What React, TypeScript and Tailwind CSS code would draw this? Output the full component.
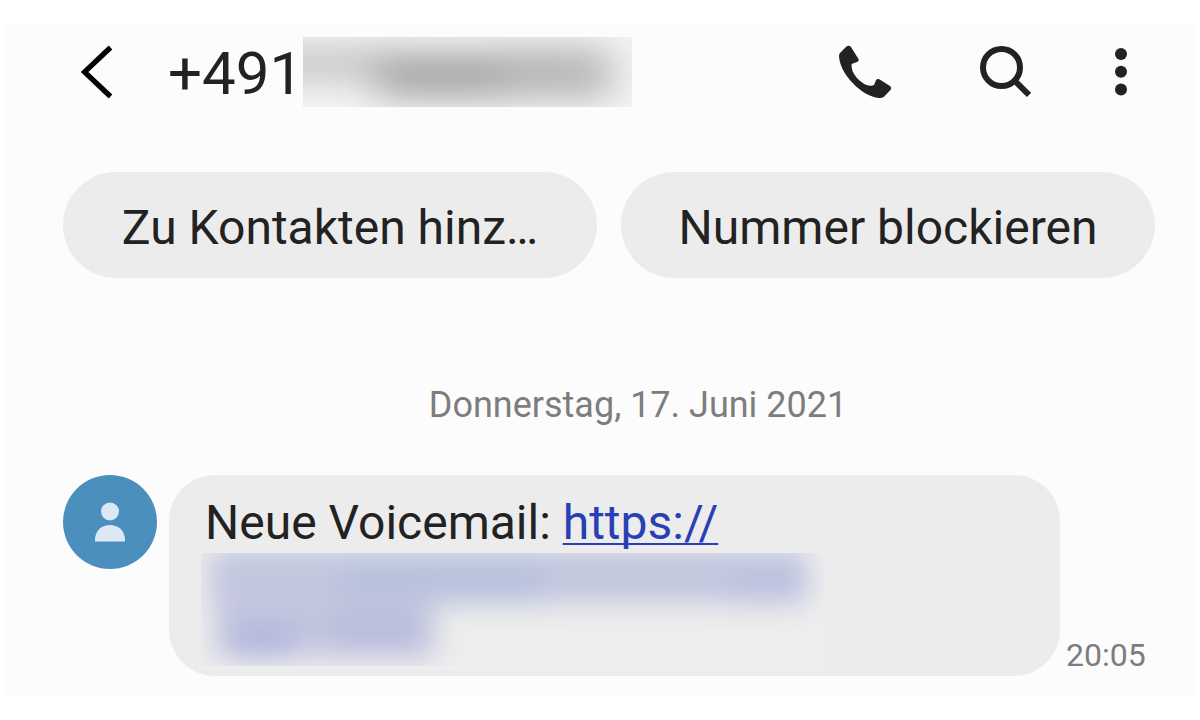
import React from "react";

function BackIcon() {
  return (
    <svg viewBox="0 0 32 54" className="h-[54px] w-8" fill="none" aria-hidden="true">
      <path d="M29.5 2.5 3.5 27l26 24.500" stroke="#000" strokeWidth="5.200" />
    </svg>
  );
}

function PhoneIcon() {
  return (
    <svg viewBox="117 71 168 168" className="h-14 w-14" fill="#222" aria-hidden="true">
      <path d="M140 78Q148 73 153 80L176 117Q177 121 173 124L155 131Q152 150 170 172Q195 198 214 196L222 194L228 180Q231 174 238 177L271 198Q276 203 272 208L252 229Q246 234 236 233C190 230 120 165 117 108Q117 101 120 98Z" />
    </svg>
  );
}

function SearchIcon() {
  return (
    <svg viewBox="0 0 52 56" className="h-14 w-[52px]" fill="none" stroke="#222" aria-hidden="true">
      <circle cx="22.500" cy="23.500" r="18.500" strokeWidth="6" />
      <path d="M35.500 36.500 50 51" strokeWidth="6" />
    </svg>
  );
}

function MoreIcon() {
  return (
    <svg viewBox="0 0 12 56" className="h-14 w-3" fill="#222" aria-hidden="true">
      <circle cx="6" cy="10" r="6" />
      <circle cx="6" cy="27.700" r="6" />
      <circle cx="6" cy="45.500" r="6" />
    </svg>
  );
}

function PersonIcon() {
  return (
    <svg viewBox="0 0 30 40" className="h-10 w-[30px]" fill="#dce9f5" aria-hidden="true">
      <circle cx="15" cy="9.500" r="9" />
      <path d="M0 39.500V36.500C1 28 7 23 15 23s14 5 15 13.500v3Z" />
    </svg>
  );
}

function HiddenNumber() {
  return (
    <svg
      viewBox="0 0 329 70"
      className="h-[70px] w-[329px] shrink-0"
      role="img"
      aria-label="Nummer unkenntlich gemacht"
    >
      <defs>
        <filter id="number-blur" x="-30%" y="-80%" width="160%" height="260%" colorInterpolationFilters="sRGB">
          <feGaussianBlur stdDeviation="20 16" />
        </filter>
        <clipPath id="number-clip">
          <rect width="329" height="70" />
        </clipPath>
      </defs>
      <g clipPath="url(#number-clip)">
        <rect width="329" height="70" fill="#f4f4f4" />
        <g filter="url(#number-blur)">
          <rect x="-50" y="8" width="130" height="38" fill="#cacaca" />
          <rect x="74" y="14" width="134" height="48" fill="#aaaaaa" />
          <rect x="200" y="10" width="108" height="52" fill="#b8b8b8" />
        </g>
      </g>
    </svg>
  );
}

function HiddenLink() {
  return (
    <svg
      viewBox="0 0 623 119"
      className="block h-[119px] w-[623px]"
      role="img"
      aria-label="Link unkenntlich gemacht"
    >
      <defs>
        <filter id="link-blur" x="-20%" y="-60%" width="140%" height="220%" colorInterpolationFilters="sRGB">
          <feGaussianBlur stdDeviation="14" />
        </filter>
        <clipPath id="link-clip">
          <rect y="2" width="623" height="113" />
        </clipPath>
      </defs>
      <rect y="2" width="623" height="117" fill="#eeeeee" />
      <g clipPath="url(#link-clip)">
        <g filter="url(#link-blur)">
          <rect x="8" y="-2" width="598" height="54" fill="#c2c6de" />
          <rect x="140" y="14" width="200" height="36" fill="#b5bfdc" />
          <rect x="530" y="20" width="76" height="30" fill="#babedd" />
          <rect x="14" y="42" width="220" height="64" fill="#c3c6de" />
          <rect x="30" y="76" width="64" height="30" fill="#aeb2dc" />
          <rect x="130" y="62" width="90" height="40" fill="#b9bcdc" />
        </g>
      </g>
    </svg>
  );
}

function ActionButton({ children }: { children: React.ReactNode }) {
  return (
    <button
      type="button"
      className="h-[106px] min-w-0 flex-1 rounded-full bg-[#ececec] px-4 pt-[6px] text-[48px] leading-[56px] whitespace-nowrap text-[#222]"
    >
      {children}
    </button>
  );
}

export default function App() {
  return (
    <div className="bg-white px-[3px] py-6 font-['Roboto',sans-serif] text-[#222]">
      <main className="bg-[#fcfcfc] pt-[13px] pr-[42px] pb-5 pl-[60px]">
        <header className="flex items-center pr-7 pl-[18px]">
          <button type="button" aria-label="Zurück">
            <BackIcon />
          </button>
          <h1 className="ml-[55px] flex items-center text-[60px] leading-[66px]">
            <span className="pt-1">+491</span>
            <HiddenNumber />
          </h1>
          <nav className="ml-auto flex items-center gap-[84px]" aria-label="Aktionen">
            <button type="button" aria-label="Anrufen">
              <PhoneIcon />
            </button>
            <button type="button" aria-label="Suchen">
              <SearchIcon />
            </button>
            <button type="button" aria-label="Weitere Optionen">
              <MoreIcon />
            </button>
          </nav>
        </header>

        <div className="mt-[65px] flex gap-6">
          <ActionButton>Zu Kontakten hinz…</ActionButton>
          <ActionButton>Nummer blockieren</ActionButton>
        </div>

        <p className="mt-[106px] pl-[58px] text-center text-[36px] leading-[42px] text-[#7d7d7d]">
          Donnerstag, 17. Juni 2021
        </p>

        <article className="mt-[49px] flex items-start">
          <div className="flex h-[94px] w-[94px] shrink-0 items-center justify-center rounded-full bg-[#4a8fbe]">
            <PersonIcon />
          </div>
          <div className="ml-3 flex-1 rounded-[46px] bg-[#ececec] pt-5 pb-[6px] pl-8">
            <p className="pl-1 text-[48px] leading-[56px]">
              Neue Voicemail:{" "}
              <a
                href="#link"
                className="text-[#2740b4] underline decoration-2 underline-offset-4 [text-decoration-skip-ink:none]"
              >
                https://
              </a>
            </p>
            <HiddenLink />
          </div>
          <time dateTime="2021-06-17T20:05" className="ml-[6px] w-[89px] self-end text-[32px] leading-[42px] text-[#7d7d7d]">
            20:05
          </time>
        </article>
      </main>
    </div>
  );
}
